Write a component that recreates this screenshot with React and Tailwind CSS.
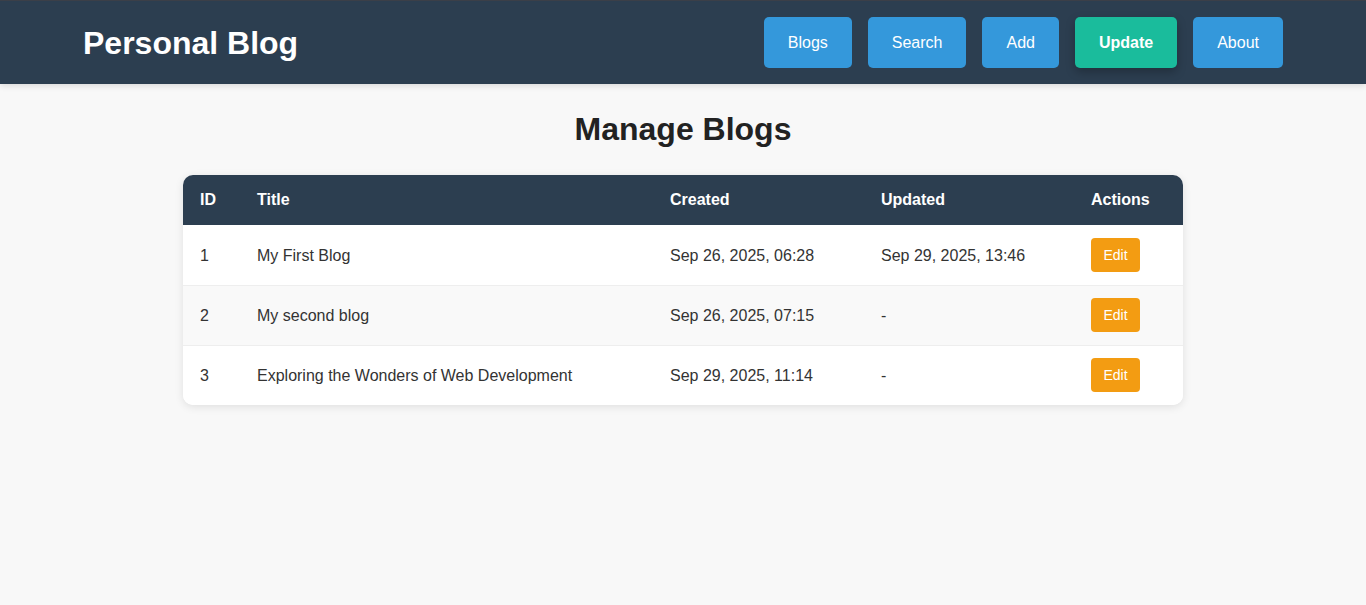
const blogs = [
  { id: 1, title: 'My First Blog', created: 'Sep 26, 2025, 06:28', updated: 'Sep 29, 2025, 13:46' },
  { id: 2, title: 'My second blog', created: 'Sep 26, 2025, 07:15', updated: '-' },
  { id: 3, title: 'Exploring the Wonders of Web Development', created: 'Sep 29, 2025, 11:14', updated: '-' },
];

const links = ['Blogs', 'Search', 'Add', 'Update', 'About'];

export default function App() {
  return (
    <div className="min-h-[605px] bg-[#f8f8f8] font-['Liberation_Sans',Arial,sans-serif] text-[#333]">
      <header className="bg-[#2c3e50] h-[84px] border-t border-[#3b3f48] shadow-[0_2px_6px_rgba(0,0,0,0.12)]">
        <div className="max-w-[1200px] mx-auto h-full flex items-center justify-between">
          <h1 className="text-[32px] font-bold text-white leading-none">Personal Blog</h1>
          <nav className="flex items-center gap-4">
            {links.map(l => (
              <a
                key={l}
                className={
                  l === 'Update'
                    ? 'h-[51px] px-6 flex items-center rounded-[5px] bg-[#1abc9c] text-white font-bold text-base shadow-[0_4px_10px_rgba(0,0,0,0.25)]'
                    : 'h-[51px] px-6 flex items-center rounded-[5px] bg-[#3498db] text-white text-base'
                }
              >
                {l}
              </a>
            ))}
          </nav>
        </div>
      </header>

      <main className="pt-[27px]">
        <h2 className="text-[32px] font-bold text-[#222] text-center leading-[37px] mb-[27px]">Manage Blogs</h2>
        <div className="w-[1000px] mx-auto bg-white rounded-[10px] overflow-hidden shadow-[0_2px_8px_rgba(0,0,0,0.1)]">
          <table className="w-full table-fixed border-collapse text-base">
            <colgroup>
              <col className="w-[58px]" />
              <col className="w-[413px]" />
              <col className="w-[211px]" />
              <col className="w-[210px]" />
              <col />
            </colgroup>
            <thead>
              <tr className="bg-[#2c3e50] text-white h-[50px]">
                <th className="text-left font-bold pl-[17px]">ID</th>
                <th className="text-left font-bold pl-4">Title</th>
                <th className="text-left font-bold pl-4">Created</th>
                <th className="text-left font-bold pl-4">Updated</th>
                <th className="text-left font-bold pl-4">Actions</th>
              </tr>
            </thead>
            <tbody>
              {blogs.map((b, i) => (
                <tr key={b.id} className={`h-[60px] ${i % 2 === 1 ? 'bg-[#f9f9f9]' : 'bg-white'} ${i < blogs.length - 1 ? 'border-b border-[#eeeeee]' : ''}`}>
                  <td className="pl-[17px] pt-[2px]">{b.id}</td>
                  <td className="pl-4 pt-[2px]">{b.title}</td>
                  <td className="pl-4 pt-[2px]">{b.created}</td>
                  <td className="pl-4 pt-[2px]">{b.updated}</td>
                  <td className="pl-4">
                    <button className="h-[34px] w-[49px] rounded-[4px] bg-[#f39c12] text-white text-sm">Edit</button>
                  </td>
                </tr>
              ))}
            </tbody>
          </table>
        </div>
      </main>
    </div>
  );
}
